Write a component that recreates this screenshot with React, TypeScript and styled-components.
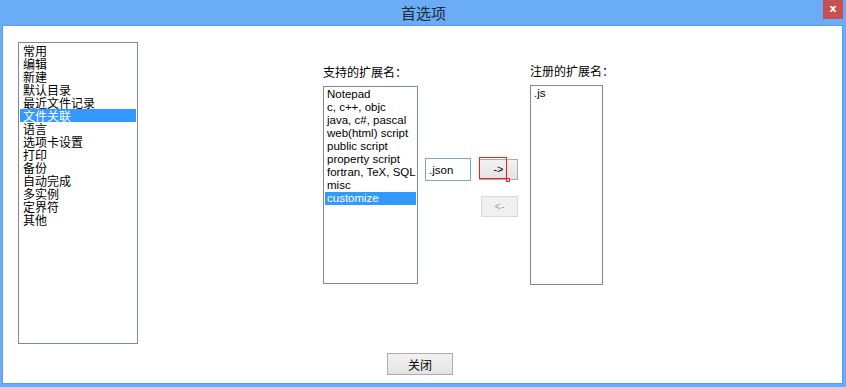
import styled, { createGlobalStyle } from "styled-components";

const GlobalStyle = createGlobalStyle`
  html, body {
    margin: 0;
    padding: 0;
    background: #6aacf5;
  }
`;

const cjk = `"Noto Sans CJK SC", "Noto Sans", sans-serif`;
const latin = `"Liberation Sans", "Noto Sans CJK SC", sans-serif`;

const categories = [
  "常用",
  "编辑",
  "新建",
  "默认目录",
  "最近文件记录",
  "文件关联",
  "语言",
  "选项卡设置",
  "打印",
  "备份",
  "自动完成",
  "多实例",
  "定界符",
  "其他",
];

const supported = [
  "Notepad",
  "c, c++, objc",
  "java, c#, pascal",
  "web(html) script",
  "public script",
  "property script",
  "fortran, TeX, SQL",
  "misc",
  "customize",
];

const registered = [".js"];

export default function App() {
  return (
    <>
      <GlobalStyle />
      <Window>
        <TitleBar>
          <Title>首选项</Title>
          <CloseButton>x</CloseButton>
        </TitleBar>
        <Content>
          <Main>
            <CategoryList>
              {categories.map((c) => (
                <CategoryItem key={c} $selected={c === "文件关联"}>
                  {c}
                </CategoryItem>
              ))}
            </CategoryList>
            <Panel>
              <ExtColumn>
                <Label>支持的扩展名：</Label>
                <ExtList $width={95} $height={198}>
                  {supported.map((s) => (
                    <ExtItem key={s} $selected={s === "customize"}>
                      {s}
                    </ExtItem>
                  ))}
                </ExtList>
              </ExtColumn>
              <ExtInput defaultValue=".json" />
              <Transfer>
                <FocusWrap>
                  <MoveButton $width={39}>-&gt;</MoveButton>
                  <FocusMark />
                  <FocusDot />
                </FocusWrap>
                <MoveButton $width={37} disabled>
                  &lt;-
                </MoveButton>
              </Transfer>
              <ExtColumn $shift={-1}>
                <Label>注册的扩展名：</Label>
                <ExtList $width={73} $height={200}>
                  {registered.map((r) => (
                    <ExtItem key={r}>{r}</ExtItem>
                  ))}
                </ExtList>
              </ExtColumn>
            </Panel>
          </Main>
          <Footer>
            <CloseDialogButton>关闭</CloseDialogButton>
          </Footer>
        </Content>
      </Window>
    </>
  );
}

const Window = styled.div`
  width: 846px;
  height: 387px;
  display: flex;
  flex-direction: column;
  background: #6aacf5;
  box-sizing: border-box;
`;

const TitleBar = styled.div`
  position: relative;
  height: 25px;
  display: flex;
  align-items: center;
  justify-content: center;
  flex-shrink: 0;
`;

const Title = styled.div`
  font-family: ${cjk};
  font-size: 15px;
  color: #1d2a3a;
  margin-left: 1px;
`;

const CloseButton = styled.div`
  position: absolute;
  top: 0;
  right: 3px;
  width: 20px;
  height: 19px;
  background: #c75050;
  color: #ffffff;
  font-family: "DejaVu Sans", sans-serif;
  font-weight: bold;
  font-size: 11px;
  line-height: 18px;
  text-align: center;
`;

const Content = styled.div`
  flex: 1;
  margin: 0 3px 3px 2px;
  background: #ffffff;
  border: 1px solid #5c9de6;
  display: flex;
  flex-direction: column;
`;

const Main = styled.div`
  display: flex;
  align-items: flex-start;
  padding: 16px 0 0 15px;
`;

const CategoryList = styled.div`
  width: 118px;
  height: 299px;
  border: 1px solid #828790;
  padding-top: 1px;
  box-sizing: content-box;
`;

const CategoryItem = styled.div<{ $selected?: boolean }>`
  font-family: ${cjk};
  font-size: 12px;
  line-height: 13px;
  height: 13px;
  padding-left: 3px;
  margin: 0 1px;
  color: ${({ $selected }) => ($selected ? "#ffffff" : "#000000")};
  background: ${({ $selected }) => ($selected ? "#3399ff" : "transparent")};
`;

const Panel = styled.div`
  display: flex;
  align-items: flex-start;
  margin-left: 185px;
  padding-top: 22px;
`;

const ExtColumn = styled.div<{ $shift?: number }>`
  display: flex;
  flex-direction: column;
  margin-top: ${({ $shift }) => $shift ?? 0}px;
`;

const Label = styled.div`
  font-family: ${cjk};
  font-size: 12px;
  line-height: 16px;
  height: 16px;
  color: #000000;
  margin-bottom: 6px;
`;

const ExtList = styled.div<{ $width: number; $height: number }>`
  width: ${({ $width }) => $width - 2}px;
  height: ${({ $height }) => $height - 3}px;
  border: 1px solid #828790;
  padding-top: 1px;
`;

const ExtItem = styled.div<{ $selected?: boolean }>`
  font-family: ${latin};
  font-size: 11.5px;
  line-height: 13px;
  height: 13px;
  padding-left: 2px;
  margin: 0 1px;
  white-space: nowrap;
  color: ${({ $selected }) => ($selected ? "#ffffff" : "#000000")};
  background: ${({ $selected }) => ($selected ? "#3399ff" : "transparent")};
`;

const ExtInput = styled.input`
  margin: 94px 0 0 7px;
  width: 46px;
  height: 23px;
  box-sizing: border-box;
  border: 1px solid #7aa7d8;
  padding: 0 3px;
  font-family: ${latin};
  font-size: 11.5px;
  color: #000000;
  outline: none;
`;

const Transfer = styled.div`
  display: flex;
  flex-direction: column;
  align-items: flex-end;
  gap: 16px;
  margin: 95px 12px 0 8px;
  width: 39px;
`;

const FocusWrap = styled.div`
  position: relative;
  display: flex;
`;

const FocusMark = styled.div`
  position: absolute;
  z-index: 1;
  left: 0;
  top: -2px;
  width: 28px;
  height: 22px;
  box-sizing: border-box;
  border: 1px solid #ff1a1a;
  pointer-events: none;
`;

const FocusDot = styled.div`
  position: absolute;
  z-index: 1;
  left: 27px;
  top: 19px;
  width: 4px;
  height: 4px;
  box-sizing: border-box;
  border: 1px solid #ff1a1a;
  background: #ffffff;
`;

const MoveButton = styled.button<{ $width: number }>`
  width: ${({ $width }) => $width}px;
  height: 21px;
  box-sizing: border-box;
  padding: 0;
  border: 1px solid ${({ disabled }) => (disabled ? "#d9d9d9" : "#adadad")};
  background: ${({ disabled }) =>
    disabled ? "#f0f0f0" : "linear-gradient(#f2f2f2, #e3e3e3)"};
  color: ${({ disabled }) => (disabled ? "#a0a0a0" : "#000000")};
  font-family: ${latin};
  font-size: 11px;
  line-height: 19px;
  text-align: center;
`;

const Footer = styled.div`
  display: flex;
  justify-content: center;
  padding: 9px 5px 0 0;
`;

const CloseDialogButton = styled.button`
  width: 66px;
  height: 22px;
  box-sizing: border-box;
  padding: 0;
  border: 1px solid #adadad;
  background: linear-gradient(#f2f2f2, #e3e3e3);
  font-family: ${cjk};
  font-size: 12px;
  color: #000000;
`;
